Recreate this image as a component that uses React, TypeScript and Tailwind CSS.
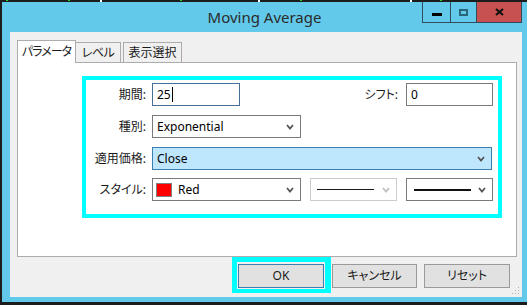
import React from "react";

const Chevron = ({ color = "#555" }: { color?: string }) => (
  <svg width="8" height="6" viewBox="0 0 8 6" className="shrink-0">
    <polyline points="1,1 4,4.5 7,1" fill="none" stroke={color} strokeWidth="1.8" />
  </svg>
);

const Label = ({ children }: { children: React.ReactNode }) => (
  <div className="w-[60px] text-right text-[12px] text-[#1a1a1a] leading-none shrink-0">{children}</div>
);

export default function App() {
  return (
    <div className="relative w-[527px] h-[305px] bg-[#1c1c1c] pt-[2px] pl-[2px] overflow-hidden font-['Noto_Sans','Noto_Sans_CJK_JP',sans-serif] [font-feature-settings:'palt']">
      {/* background desktop dots */}
      <div className="absolute top-0 left-[6px] w-[2px] h-[1px] bg-[#2bd42b]" />
      <div className="absolute top-0 left-[68px] w-[2px] h-[1px] bg-[#2bd42b]" />
      <div className="absolute top-0 left-[100px] w-[2px] h-[2px] bg-white" />
      <div className="absolute top-0 left-[180px] w-[2px] h-[1px] bg-[#2bd42b]" />
      <div className="absolute top-0 left-[258px] w-[2px] h-[2px] bg-white" />
      <div className="absolute top-0 left-[300px] w-[2px] h-[1px] bg-[#2bd42b]" />
      <div className="absolute top-0 left-[410px] w-[2px] h-[2px] bg-white" />
      <div className="absolute top-0 left-[440px] w-[2px] h-[1px] bg-[#2bd42b]" />

      <div className="relative w-[525px] h-[300px] bg-[#62c9ea] flex flex-col">
        {/* title bar */}
        <div className="h-[30px] flex items-center justify-center text-[15px] text-[#2b2b2b]">Moving Average</div>
        <div className="absolute top-0 right-[5px] flex h-[21px] border border-t-0 border-[#2f4d5a]">
          <div className="w-[28px] border-r border-[#2f4d5a] flex items-center justify-center">
            <div className="w-[10px] h-[3px] bg-black mt-[5px]" />
          </div>
          <div className="w-[26px] border-r border-[#2f4d5a] flex items-center justify-center">
            <div className="w-[9px] h-[7px] border-2 border-[#2a6578]" />
          </div>
          <div className="w-[44px] bg-[#c75050] flex items-center justify-center">
            <svg width="9" height="8" viewBox="0 0 9 8">
              <path d="M1,1 L8,7 M8,1 L1,7" stroke="#111" strokeWidth="2.2" />
            </svg>
          </div>
        </div>

        {/* body */}
        <div className="relative ml-[8px] w-[512px] h-[265px] bg-[#f0f0f0] pt-[8px] pl-[7px]">
          {/* tabs */}
          <div className="flex items-end h-[22px]">
            <div className="relative z-10 w-[59px] h-[23px] -mb-[1px] bg-white border border-b-0 border-[#acacac] flex items-center justify-center text-[12px] tracking-[-1px] text-[#1a1a1a]">パラメータ</div>
            <div className="w-[45px] h-[20px] bg-[#f0f0f0] border border-l-0 border-b-0 border-[#acacac] flex items-center justify-center text-[12px] tracking-[-0.5px] text-[#1a1a1a]">レベル</div>
            <div className="ml-[2px] w-[59px] h-[20px] bg-[#f0f0f0] border border-b-0 border-[#acacac] flex items-center justify-center text-[12px] text-[#1a1a1a]">表示選択</div>
          </div>

          {/* panel */}
          <div className="w-[500px] h-[195px] bg-white border border-[#acacac] pl-[64px] pt-[13px]">
            <div className="w-[420px] h-[142px] border-4 border-[#00ffff] pt-[3px] pr-[5px] flex flex-col">
              {/* row 1 */}
              <div className="flex items-center h-[23px]">
                <Label>期間:</Label>
                <div className="ml-[6px] w-[88px] h-[23px] border border-[#476f96] bg-white flex items-center pl-[4px] text-[12px] text-black">
                  25<span className="ml-[1px] w-[1px] h-[15px] bg-black" />
                </div>
                <div className="ml-auto text-[12px] text-[#1a1a1a] leading-none mr-[8px]">シフト:</div>
                <div className="w-[87px] h-[23px] border border-[#7a7a7a] bg-white flex items-center pl-[4px] text-[12px] text-black">0</div>
              </div>
              {/* row 2 */}
              <div className="flex items-center h-[23px] mt-[9px]">
                <Label>種別:</Label>
                <div className="ml-[6px] w-[149px] h-[23px] border border-[#7a7a7a] bg-white flex items-center justify-between pl-[4px] pr-[6px] text-[12px] text-black">
                  <span>Exponential</span>
                  <Chevron />
                </div>
              </div>
              {/* row 3 */}
              <div className="flex items-center h-[23px] mt-[9px]">
                <Label>適用価格:</Label>
                <div className="ml-[6px] w-[340px] h-[23px] border border-[#3c7fb1] bg-[#bee6fd] flex items-center justify-between pl-[4px] pr-[6px] text-[12px] text-black">
                  <span>Close</span>
                  <Chevron />
                </div>
              </div>
              {/* row 4 */}
              <div className="flex items-center h-[23px] mt-[8px]">
                <Label>スタイル:</Label>
                <div className="ml-[6px] w-[149px] h-[23px] border border-[#7a7a7a] bg-white flex items-center pl-[3px] pr-[6px] text-[12px] text-black">
                  <div className="w-[16px] h-[14px] border border-[#808080] bg-[#ff0000] shrink-0" />
                  <span className="ml-[6px]">Red</span>
                  <div className="ml-auto">
                    <Chevron />
                  </div>
                </div>
                <div className="ml-[9px] w-[87px] h-[23px] border border-[#cccccc] bg-white flex items-center pl-[6px] pr-[6px]">
                  <div className="w-[57px] h-[1px] bg-[#1a1a1a]" />
                  <div className="ml-auto">
                    <Chevron color="#bfbfbf" />
                  </div>
                </div>
                <div className="ml-[9px] w-[87px] h-[23px] border border-[#7a7a7a] bg-white flex items-center pl-[7px] pr-[6px]">
                  <div className="w-[57px] h-[2px] bg-[#111111]" />
                  <div className="ml-auto">
                    <Chevron />
                  </div>
                </div>
              </div>
            </div>
          </div>

          {/* buttons */}
          <div className="flex items-start ml-[215px]">
            <div className="border-[#00ffff] border-l-[5px] border-t-[5px] border-r-[6px] border-b-[4px] pl-[1px] pt-[2px] pr-[1px] pb-[1px]">
              <div className="w-[86px] h-[24px] bg-[#e1e1e1] border border-[#3c7fb1] flex items-center justify-center text-[12px] text-[#1a1a1a]">OK</div>
            </div>
            <div className="ml-[1px] mt-[7px] w-[85px] h-[24px] bg-[#e1e1e1] border border-[#9a9a9a] flex items-center justify-center text-[12px] text-[#1a1a1a]">キャンセル</div>
            <div className="ml-[7px] mt-[7px] w-[86px] h-[24px] bg-[#e1e1e1] border border-[#9a9a9a] flex items-center justify-center text-[12px] text-[#1a1a1a]">リセット</div>
          </div>

          {/* resize grip */}
          <svg className="absolute right-[2px] bottom-[2px]" width="8" height="8" viewBox="0 0 8 8">
            <rect x="6" y="0" width="1" height="1" fill="#b0b0b0" />
            <rect x="3" y="3" width="1" height="1" fill="#b0b0b0" />
            <rect x="6" y="3" width="1" height="1" fill="#b0b0b0" />
            <rect x="0" y="6" width="1" height="1" fill="#b0b0b0" />
            <rect x="3" y="6" width="1" height="1" fill="#b0b0b0" />
            <rect x="6" y="6" width="1" height="1" fill="#b0b0b0" />
          </svg>
        </div>
      </div>
    </div>
  );
}
